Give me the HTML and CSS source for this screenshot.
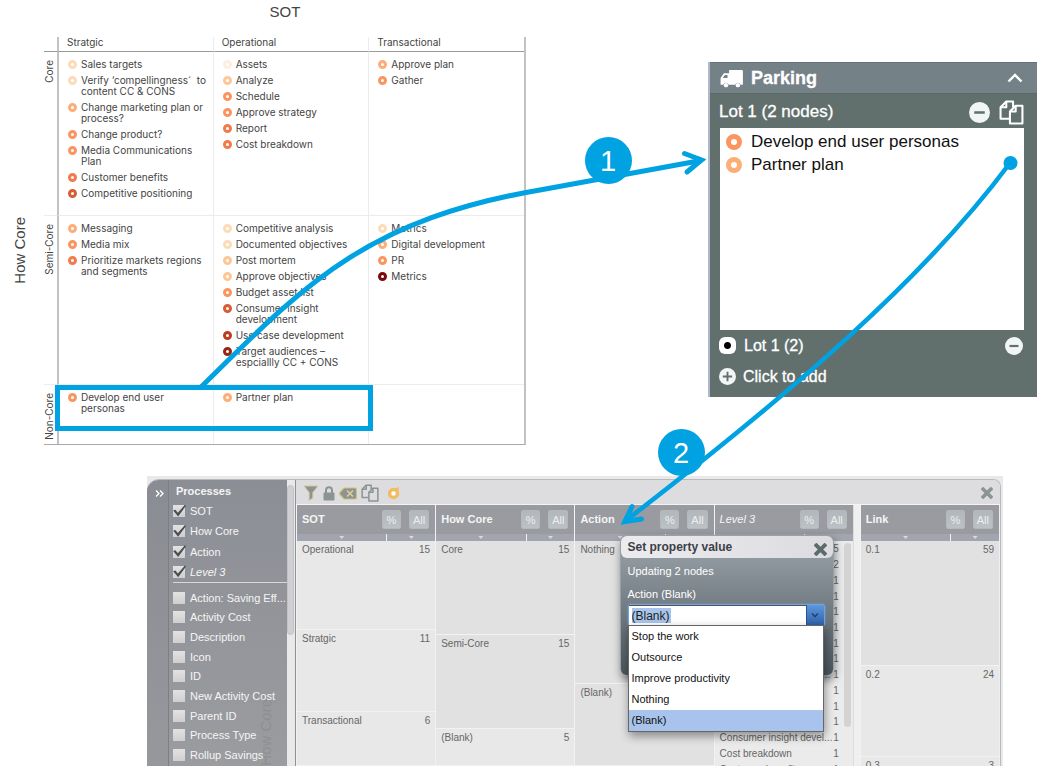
FILE: index.html
```html
<!DOCTYPE html>
<html lang="en">
<head>
<meta charset="utf-8">
<title>Process parking</title>
<link rel="stylesheet" href="styles.css">
</head>
<body>
<svg class="defs" aria-hidden="true">
  <symbol id="i-minus" viewBox="0 0 20 20"><circle cx="10" cy="10" r="10" fill="#f1f5f5"/><path d="M5 10h10" stroke="#616f6d" stroke-width="2.4"/></symbol>
  <symbol id="i-plus" viewBox="0 0 20 20"><circle cx="10" cy="10" r="10" fill="#f1f5f5"/><path d="M4.500 10h11M10 4.500v11" stroke="#616f6d" stroke-width="2.2"/></symbol>
  <symbol id="i-copy" viewBox="0 0 24 24"><g fill="none" stroke="currentColor" stroke-width="2" stroke-linejoin="round"><path d="M10 18H1.500V7L7 1.500h6.500V7"/><path d="M7 1.500V7H1.500"/><path d="M16 5.500h6.500v17H10.500V11z"/><path d="M16 5.500V11h-5.500"/></g></symbol>
  <symbol id="i-cross" viewBox="0 0 12 12"><path d="M2.200 2.200l7.600 7.600M9.800 2.200L2.200 9.800" stroke="currentColor" stroke-width="3.600" stroke-linecap="square"/></symbol>
</svg>
<main class="page">
  <div class="top">
    <section class="matrix">
      <h1 class="axis-x">SOT</h1>
      <div class="axis-y"><span>How Core</span></div>
      <table class="grid">
        <thead>
          <tr><td class="corner"></td><th scope="col">Stratgic</th><th scope="col">Operational</th><th scope="col">Transactional</th></tr>
        </thead>
        <tbody>
          <tr class="row-core">
            <th scope="row"><span>Core</span></th>
            <td><ul class="nodes">
              <li class="c2">Sales targets</li>
              <li class="c2">Verify ‘compellingness´&nbsp; to<br>content CC &amp; CONS</li>
              <li class="c4">Change marketing plan or<br>process?</li>
              <li class="c5">Change product?</li>
              <li class="c5">Media Communications<br>Plan</li>
              <li class="c6">Customer benefits</li>
              <li class="c7">Competitive positioning</li>
            </ul></td>
            <td><ul class="nodes">
              <li class="c1">Assets</li>
              <li class="c3">Analyze</li>
              <li class="c5">Schedule</li>
              <li class="c5">Approve strategy</li>
              <li class="c6">Report</li>
              <li class="c6">Cost breakdown</li>
            </ul></td>
            <td><ul class="nodes">
              <li class="c4">Approve plan</li>
              <li class="c5">Gather</li>
            </ul></td>
          </tr>
          <tr class="row-semi">
            <th scope="row"><span>Semi-Core</span></th>
            <td><ul class="nodes">
              <li class="c4">Messaging</li>
              <li class="c5">Media mix</li>
              <li class="c6">Prioritize markets regions<br>and segments</li>
            </ul></td>
            <td><ul class="nodes">
              <li class="c2">Competitive analysis</li>
              <li class="c2">Documented objectives</li>
              <li class="c3">Post mortem</li>
              <li class="c3">Approve objectives</li>
              <li class="c5">Budget asset list</li>
              <li class="c7">Consumer insight<br>development</li>
              <li class="c8">Use case development</li>
              <li class="c9">Target audiences –<br>espciallly CC + CONS</li>
            </ul></td>
            <td><ul class="nodes">
              <li class="c2">Metrics</li>
              <li class="c4">Digital development</li>
              <li class="c5">PR</li>
              <li class="c10">Metrics</li>
            </ul></td>
          </tr>
          <tr class="row-non">
            <th scope="row"><span>Non-Core</span></th>
            <td><ul class="nodes">
              <li class="c5">Develop end user<br>personas</li>
            </ul></td>
            <td><ul class="nodes">
              <li class="c4">Partner plan</li>
            </ul></td>
            <td></td>
          </tr>
        </tbody>
      </table>
    </section>

    <aside class="parking">
      <header class="parking-head">
        <svg class="truck" viewBox="0 0 24 20" aria-hidden="true"><path fill="#fff" d="M9.500 1H23a1 1 0 0 1 1 1v14.500h-2.500a2.900 2.900 0 0 0-5.600 0H9a2.900 2.900 0 0 0-5.600 0H.5V9.500L4 4.500h5.500z"/><path fill="#748288" d="M2.800 9.400L5 6.200h2.800v3.200z"/><circle cx="6.200" cy="17" r="2.300" fill="#fff"/><circle cx="18.700" cy="17" r="2.300" fill="#fff"/></svg>
        <h2>Parking</h2>
        <button class="plain" aria-label="Collapse"><svg width="16" height="10" viewBox="0 0 16 10"><path d="M1.500 8.500L8 2l6.500 6.500" fill="none" stroke="#fff" stroke-width="2.400"/></svg></button>
      </header>
      <div class="lot-head">
        <h3>Lot 1 (2 nodes)</h3>
        <button class="plain" aria-label="Remove"><svg width="21" height="21"><use href="#i-minus"/></svg></button>
        <button class="plain" aria-label="Copy"><svg width="25" height="25"><use href="#i-copy"/></svg></button>
      </div>
      <ul class="lot-list">
        <li class="c5">Develop end user personas</li>
        <li class="c4">Partner plan</li>
      </ul>
      <div class="lot-row">
        <input type="radio" id="lot1" name="lot" checked>
        <label for="lot1">Lot 1 (2)</label>
        <button class="plain" aria-label="Remove lot"><svg width="18" height="18"><use href="#i-minus"/></svg></button>
      </div>
      <button class="plain lot-row add"><svg width="17" height="17" aria-hidden="true"><use href="#i-plus"/></svg>Click to add</button>
    </aside>
  </div>

  <section class="window">
    <div class="frame">
      <button class="plain strip" aria-label="Collapse panel"><svg width="9" height="7" viewBox="0 0 9 7"><path d="M1 .5l3 3-3 3M5 .5l3 3-3 3" fill="none" stroke="#fff" stroke-width="1.300"/></svg></button>
      <nav class="sidebar">
        <h2>Processes</h2>
        <div class="checks on">
          <label><input type="checkbox" checked>SOT</label>
          <label><input type="checkbox" checked>How Core</label>
          <label><input type="checkbox" checked>Action</label>
          <label><input type="checkbox" checked><i>Level 3</i></label>
        </div>
        <div class="checks off">
          <label><input type="checkbox">Action: Saving Eff...</label>
          <label><input type="checkbox">Activity Cost</label>
          <label><input type="checkbox">Description</label>
          <label><input type="checkbox">Icon</label>
          <label><input type="checkbox">ID</label>
          <label><input type="checkbox">New Activity Cost</label>
          <label><input type="checkbox">Parent ID</label>
          <label><input type="checkbox">Process Type</label>
          <label><input type="checkbox">Rollup Savings</label>
        </div>
        <span class="ghost" aria-hidden="true">How Core</span>
      </nav>
      <div class="side-scroll"><div></div></div>
      <div class="main">
        <div class="toolbar">
          <button class="plain" aria-label="Filter"><svg width="16" height="16" viewBox="0 0 16 16"><path d="M1 1h14l-5.200 6.500V13L6.200 15.500v-8z" fill="#8b9493" stroke="#d6c596" stroke-width="1"/></svg></button>
          <button class="plain" aria-label="Lock"><svg width="12" height="15" viewBox="0 0 12 15"><path d="M3 7V4.200a3 3 0 0 1 6 0V7" fill="none" stroke="#8b9493" stroke-width="2"/><rect x=".5" y="6.500" width="11" height="8" rx="1" fill="#8b9493"/></svg></button>
          <button class="plain" aria-label="Clear"><svg width="18" height="13" viewBox="0 0 18 13"><path d="M5 1h11q1.500 0 1.500 1.500v8Q17.500 12 16 12H5L.8 7.500v-2z" fill="#8b9493" stroke="#d9bd72" stroke-width="1.200"/><path d="M8 3.500l6 6M14 3.500l-6 6" stroke="#e2cf9c" stroke-width="1.500"/></svg></button>
          <button class="plain" aria-label="Copy"><svg width="18" height="18"><use href="#i-copy"/></svg></button>
          <button class="plain ring-tool" aria-label="Highlight"><svg width="14" height="14" viewBox="0 0 14 14"><circle cx="6.500" cy="7.500" r="4" fill="#fff" stroke="#f0bd62" stroke-width="3.400"/><path d="M8 2.500l4-1.500-.5 4.500" fill="#f0bd62"/></svg></button>
          <button class="plain close" aria-label="Close"><svg width="12" height="12"><use href="#i-cross"/></svg></button>
        </div>
        <div class="columns">
          <div class="group">
            <div class="col">
              <div class="col-head"><b>SOT</b><button>%</button><button>All</button></div>
              <div class="sort"><span></span><span></span></div>
              <div class="cell h89"><span>Operational</span><span>15</span></div>
              <div class="cell h82"><span>Stratgic</span><span>11</span></div>
              <div class="cell rest"><span>Transactional</span><span>6</span></div>
            </div>
            <div class="col">
              <div class="col-head"><b>How Core</b><button>%</button><button>All</button></div>
              <div class="sort"><span></span><span></span></div>
              <div class="cell dark h94"><span>Core</span><span>15</span></div>
              <div class="cell dark h94"><span>Semi-Core</span><span>15</span></div>
              <div class="cell rest"><span>(Blank)</span><span>5</span></div>
            </div>
            <div class="col">
              <div class="col-head"><b>Action</b><button>%</button><button>All</button></div>
              <div class="sort"><span></span><span></span></div>
              <div class="cell dark h143"><span>Nothing</span></div>
              <div class="cell dark rest"><span>(Blank)</span></div>
            </div>
            <div class="col">
              <div class="col-head"><i>Level 3</i><button>%</button><button>All</button></div>
              <div class="sort"><span></span><span></span></div>
              <div class="level">
                <ul>
                  <li><span></span><span>5</span></li>
                  <li><span></span><span>2</span></li>
                  <li><span></span><span>1</span></li>
                  <li><span></span><span>1</span></li>
                  <li><span></span><span>1</span></li>
                  <li><span></span><span>1</span></li>
                  <li><span></span><span>1</span></li>
                  <li><span></span><span>1</span></li>
                  <li class="cut"><span>...</span><span>1</span></li>
                  <li><span></span><span>1</span></li>
                  <li><span></span><span>1</span></li>
                  <li><span></span><span>1</span></li>
                  <li><span>Consumer insight devel...</span><span>1</span></li>
                  <li><span>Cost breakdown</span><span>1</span></li>
                  <li><span>Customer benefits</span><span>1</span></li>
                </ul>
                <div class="level-scroll"></div>
              </div>
            </div>
          </div>
          <div class="link">
            <div class="col">
              <div class="col-head"><b>Link</b><button>%</button><button>All</button></div>
              <div class="sort"><span></span><span></span></div>
              <div class="cell dark h125"><span>0.1</span><span>59</span></div>
              <div class="cell h91"><span>0.2</span><span>24</span></div>
              <div class="cell rest"><span>0.3</span><span>3</span></div>
            </div>
          </div>
        </div>
      </div>
    </div>

    <div class="dialog" role="dialog" aria-labelledby="dlg-title">
      <header><h2 id="dlg-title">Set property value</h2><button class="plain" aria-label="Close dialog"><svg width="13" height="13"><use href="#i-cross"/></svg></button></header>
      <div class="dialog-body">
        <p>Updating 2 nodes</p>
        <label for="prop">Action (Blank)</label>
        <div class="combo">
          <input id="prop" type="text" role="combobox" aria-expanded="true" aria-controls="prop-list" value="(Blank)">
          <button aria-label="Show choices"><svg width="8" height="6" viewBox="0 0 8 6"><path d="M1 1.500l3 3 3-3" fill="none" stroke="#26436e" stroke-width="1.600"/></svg></button>
          <ul class="menu" id="prop-list" role="listbox">
            <li role="option">Stop the work</li>
            <li role="option">Outsource</li>
            <li role="option">Improve productivity</li>
            <li role="option">Nothing</li>
            <li role="option" aria-selected="true">(Blank)</li>
          </ul>
        </div>
      </div>
    </div>
  </section>

  <svg class="callouts" viewBox="0 0 1037 766" preserveAspectRatio="none">
    <g fill="none" stroke="#00a2e1" stroke-width="5">
      <rect x="57.500" y="387.500" width="313" height="41"/>
      <path d="M201 387C300 290 362 220 540 190L701 160.500"/>
      <path d="M684.500 153.500L701.500 160 687 172" stroke-linecap="round"/>
      <path d="M1010 163C925 277 797 389 624 522" stroke-width="4.600"/>
      <path d="M632 506.500L625 521.500 641.500 519" stroke-linecap="round"/>
    </g>
    <g fill="#00a2e1">
      <circle cx="1010.500" cy="163" r="7"/>
      <path d="M706 159.700l-9-4v8zM621 524.500l4-9 5 7z"/>
      <circle cx="608.500" cy="160.500" r="23.500"/>
      <circle cx="681.500" cy="452.500" r="23.500"/>
    </g>
    <g class="badge-text">
      <text x="608" y="171">1</text>
      <text x="681" y="463">2</text>
    </g>
  </svg>
</main>
</body>
</html>
```
FILE: styles.css
```css
*, *::before { box-sizing: border-box; }
body { margin: 0; background: #fff; color: #444; font: 10px/11px "Liberation Sans", Arial, sans-serif; }
h1, h2, h3, p, ul { margin: 0; padding: 0; font-weight: normal; }
ul { list-style: none; }
.defs { display: block; width: 0; height: 0; }
.plain { margin: 0; padding: 0; border: 0; background: none; color: inherit; font: inherit; line-height: 0; }
.page { position: relative; display: flex; flex-direction: column; height: 100vh; overflow: hidden; }
.top { display: grid; grid-template-columns: 526fr 182fr 329fr; align-items: start; }

.c1 { --ring: #fceee0; } .c2 { --ring: #fbdcb9; } .c3 { --ring: #fdc798; } .c4 { --ring: #fdae76; }
.c5 { --ring: #fb9560; } .c6 { --ring: #f17b4a; } .c7 { --ring: #d65d35; } .c8 { --ring: #ba3d20; }
.c9 { --ring: #9c2415; } .c10 { --ring: #7c0808; }

/* Matrix */
.matrix { display: grid; grid-template-columns: 44px 1fr; }
.axis-x { grid-column: 2; height: 37px; padding-top: 3px; font-size: 15px; line-height: 17px; text-align: center; }
.axis-y { display: flex; align-items: center; justify-content: center; padding: 18px 6px 0 0; font-size: 15px; line-height: 17px; }
.axis-y span, .grid tbody th span { writing-mode: vertical-rl; transform: rotate(180deg); }
.grid { width: 100%; table-layout: fixed; border-collapse: separate; border-spacing: 0; border-bottom: 1px solid #aaa; border-right: 2px solid #c2c2c2; font-family: Inter, "Liberation Sans", sans-serif; }
.grid th, .grid td { padding: 0; font-weight: normal; text-align: left; vertical-align: top; }
.grid thead th, .corner { height: 15px; border-bottom: 1px solid #9a9a9a; }
.grid thead th { padding-left: 8px; border-left: 1px solid #ececec; }
.corner { width: 13px; }
.grid tbody td { padding: 7px 0 0 9px; border-left: 1px solid #ececec; border-top: 1px solid #ececec; }
.grid tbody th { padding: 8px 0 0; border-top: 1px solid #ececec; }
.grid tr > :nth-child(2) { border-left: 2px solid #c2c2c2; }
.grid .row-core > * { height: 163px; border-top: 0; }
.row-semi > * { height: 169px; }
.row-non > * { height: 60px; }
.nodes { display: grid; gap: 5px; }
.nodes li { display: grid; grid-template-columns: 9px 1fr; gap: 4px; white-space: nowrap; }
.nodes li::before { content: ""; width: 9px; height: 9px; margin-top: 1px; border: 3px solid var(--ring); border-radius: 50%; }

/* Parking */
.parking { grid-column: 3; margin-top: 62px; border-left: 2px solid #aeb9cf; padding-bottom: 5px; background: #616f6d; color: #fff; font-size: 16px; line-height: 20px; -webkit-text-stroke: 0.3px; }
.parking-head { display: flex; align-items: center; gap: 8px; height: 32px; padding: 0 14px 0 10px; background: #748288; border-top: 1px solid #67757a; border-bottom: 1px solid #5b6867; }
.parking-head h2 { flex: 1; font-size: 18px; font-weight: bold; }
.truck { width: 23px; height: 19px; }
.lot-head { display: flex; align-items: center; gap: 9px; height: 34px; padding: 2px 13px 0 9px; }
.lot-head h3 { flex: 1; font-size: 17px; }
.lot-list { height: 202px; margin: 0 13px 0 10px; padding: 2px 6px; background: #fff; color: #111; font-size: 17px; line-height: 23px; -webkit-text-stroke: 0; }
.lot-list li { display: flex; align-items: center; gap: 9px; }
.lot-list li::before { content: ""; width: 16px; height: 16px; border: 5px solid var(--ring); border-radius: 50%; }
.lot-row { display: flex; align-items: center; height: 31px; padding: 0 14px 0 9px; gap: 8px; }
.lot-row label { flex: 1; }
.lot-row input { appearance: none; width: 17px; height: 17px; margin: 0; border-radius: 6px; background: radial-gradient(circle, #000 0 3px, #fff 4px); }
.add { gap: 7px; line-height: 20px; }

/* Process window */
.window { position: relative; flex: 1; min-height: 0; margin: 31px 34px 0 147px; padding: 3px 2px 0 0; background: #e9e9ea; }
.frame { display: flex; height: 100%; overflow: hidden; border: solid #b9babd; border-width: 1px 1px 0 0; border-radius: 12px 8px 0 0; background: #ededee; }
.strip { display: flex; justify-content: center; width: 22px; padding: 10px 0 0 3px; background: linear-gradient(#8a8c93, #96989c); border-right: 1px solid #7b8086; }
.sidebar { position: relative; width: 118px; padding: 4px 0 0 4px; background: linear-gradient(#8c8e96, #9b9c9f); color: #f5f5f5; font-size: 11px; line-height: 14px; white-space: nowrap; }
.sidebar h2 { padding-left: 3px; margin-bottom: 3px; font-size: 11px; font-weight: bold; line-height: 14px; }
.checks { position: relative; z-index: 1; display: grid; grid-auto-rows: 1fr; }
.checks.on { height: 82px; border-bottom: 1px solid #d8d8da; }
.checks.off { height: 182px; padding-top: 5px; }
.checks label { display: flex; align-items: center; gap: 5px; }
.checks input { appearance: none; position: relative; flex: none; width: 12px; height: 12px; margin: 0; background: linear-gradient(#e2e2e2, #cfcfd0); }
.checks input:checked::before { content: ""; position: absolute; inset: -1px; background: #4a4f52; clip-path: polygon(8% 46%, 24% 40%, 42% 62%, 92% 4%, 100% 12%, 44% 88%); }
.ghost { position: absolute; right: 14px; bottom: 0; color: #83868a; font-size: 15px; line-height: 15px; writing-mode: vertical-rl; transform: rotate(180deg); opacity: 0.5; }
.side-scroll { width: 9px; background: #e9e9ea; border-right: 1px solid #8f9199; }
.side-scroll div { width: 7px; height: 150px; margin-top: 5px; border-radius: 4px; background: #d0d0d3; border: 1px solid #c2c2c6; }
.main { flex: 1; min-width: 0; display: flex; flex-direction: column; }
.toolbar { display: flex; align-items: center; gap: 4px; height: 25px; padding: 2px 7px 0; background: #dddde0; border-bottom: 1px solid #f4f4f4; color: #8b9493; }
.ring-tool { margin-left: 4px; }
.close { margin-left: auto; }
.columns { flex: 1; min-height: 0; display: flex; gap: 6px; padding-right: 1px; background: #efefef; }
.group { flex: 4; display: grid; grid-template-columns: repeat(4, 1fr); border-right: 1px solid #ddd; }
.link { flex: 1; display: grid; }
.col { display: flex; flex-direction: column; min-width: 0; min-height: 0; border-left: 1px solid #f2f2f2; color: #666; }
.col-head { display: flex; align-items: center; gap: 8px; flex: none; height: 29px; padding: 0 6px 0 5px; background: #9a9ba1; color: #f5f5f5; font-size: 11px; }
.col-head > :first-child { flex: 1; }
.col-head button { height: 19px; min-width: 19px; padding: 0 3px; border: 1px solid #b4b9bd; border-radius: 2px; background: linear-gradient(#b2b7bc, #bcc1c5); color: #eee; font: 11px/14px "Liberation Sans", Arial, sans-serif; }
.sort { display: grid; grid-template-columns: 90fr 49fr; height: 7px; flex: none; background: #a2a5b0; }
.sort span + span { border-left: 1px solid #f2f2f2; }
.sort span::before { content: ""; display: block; width: 5px; height: 3px; margin: 2px auto 0; background: #d8d9dc; clip-path: polygon(0 0, 100% 0, 50% 100%); }
.cell { display: flex; justify-content: space-between; flex: none; padding: 3px 5px 0; border-bottom: 1px solid #f2f2f2; background: #e8e8e8; }
.cell.dark { background: #e1e1e1; }
.cell.rest { flex: 1; }
.h82 { height: 82px; } .h89 { height: 89px; } .h91 { height: 91px; } .h94 { height: 94px; } .h125 { height: 125px; } .h143 { height: 143px; }
.level { display: flex; gap: 5px; flex: 1; min-height: 0; overflow: hidden; padding: 0 2px 0 5px; background: #ebebeb; }
.level ul { flex: 1; display: grid; grid-auto-rows: 1fr; height: 236px; white-space: nowrap; }
.level li { display: flex; justify-content: space-between; align-items: center; }
.level .cut { justify-content: flex-end; gap: 3px; }
.level-scroll { width: 7px; height: 184px; margin-top: 2px; border-radius: 4px; background: #d3d3d4; }

/* Dialog */
.dialog { position: absolute; left: 55.200%; top: 59px; width: 214px; border: 1px solid #97a1a9; border-radius: 7px; background: linear-gradient(#929aa1 20px, #4a555c); box-shadow: 1px 4px 9px rgba(0, 0, 0, 0.45); color: #fff; font-size: 11px; line-height: 13px; }
.dialog header { display: flex; align-items: center; justify-content: space-between; height: 22px; padding: 0 6px 0 7px; border-radius: 6px; background: linear-gradient(90deg, #ececef, #dcdce0); color: #3c4048; }
.dialog header h2 { font-size: 12px; font-weight: bold; }
.dialog header button { color: #5d6b6a; margin-top: 4px; }
.dialog-body { padding: 7px 8px 49px 7px; }
.dialog-body p { margin-bottom: 10px; }
.combo { position: relative; display: flex; height: 22px; margin-top: 3px; border: 1px solid #6ea3dc; border-radius: 3px; box-shadow: 0 0 2px #6ea3dc; background: #fff; }
.combo input { flex: 1; min-width: 0; padding: 0 3px; border: 0; border-top: 1px solid #555; outline: 0; background: linear-gradient(#a8c4ec, #a8c4ec) 3px 2px / 39px 15px no-repeat #fff; color: #222; font: 12px/18px "Liberation Sans", Arial, sans-serif; }
.combo button { width: 18px; padding: 0; border: 0; border-left: 1px solid #2c4f86; background: linear-gradient(#5b98dc, #2f62ab); line-height: 0; }
.menu { position: absolute; top: 20px; left: -1px; right: 0; border: 1px solid #666; background: #fff; color: #111; box-shadow: 1px 4px 9px rgba(0, 0, 0, 0.4); line-height: 14px; }
.menu li { padding: 3px; height: 21px; }
.menu li[aria-selected] { background: #a8c4ec; }

/* Arrows and numbered badges */
.callouts { position: absolute; inset: 0; width: 100%; height: 766px; pointer-events: none; }
.badge-text { fill: #fff; font-size: 29px; text-anchor: middle; }
```
